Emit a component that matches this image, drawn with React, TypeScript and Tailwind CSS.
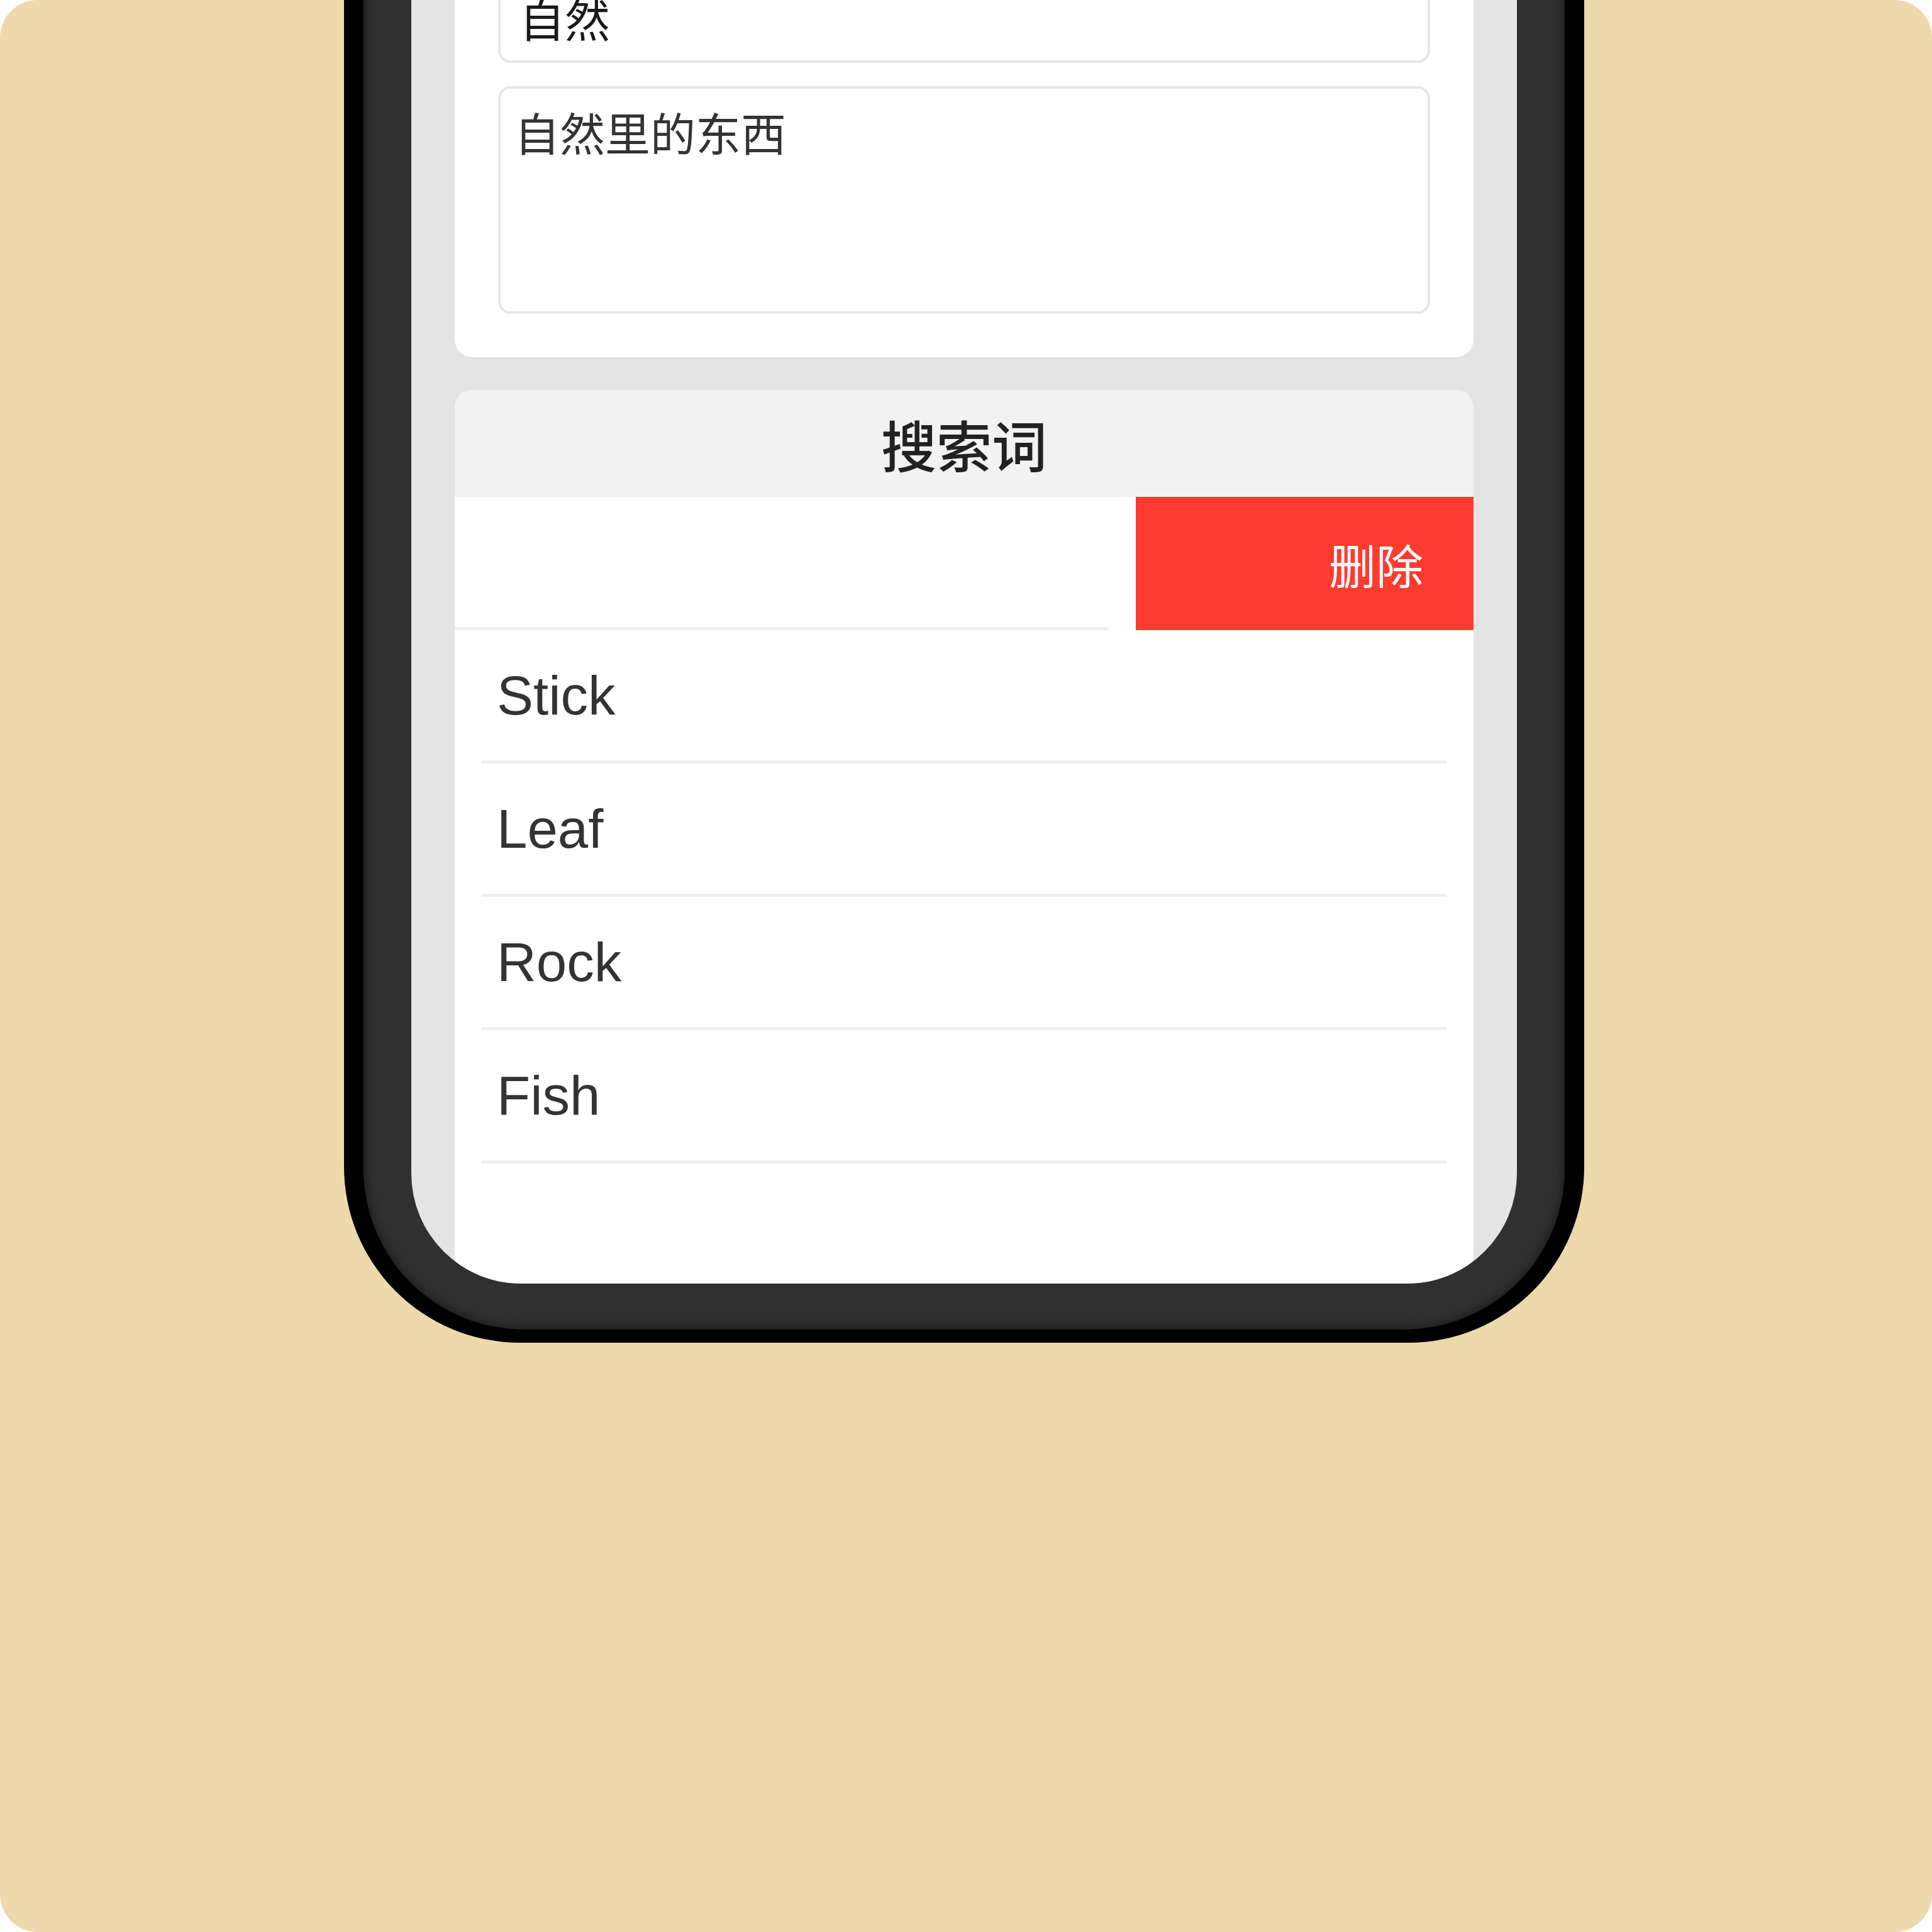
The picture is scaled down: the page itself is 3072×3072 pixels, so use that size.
const cjk = "font-['Noto_Sans_CJK_SC',sans-serif]";
const latin = "font-['Liberation_Sans','Noto_Sans_CJK_SC',sans-serif]";

const words = ['Stick', 'Leaf', 'Rock', 'Fish'];

/** 리스트 한 줄 */
function WordRow({ word }: { word: string }) {
  return (
    <div
      className={`h-[212px] mx-[43px] border-b-[5px] border-[#efefef] flex items-center pl-[24px] text-[87px] leading-none text-[#333] ${latin}`}
    >
      {word}
    </div>
  );
}

/** 스와이프로 삭제 버튼이 열린 줄 (내용은 왼쪽으로 밀려 보이지 않음) */
function SwipedRow() {
  return (
    <div className="relative h-[212px] overflow-hidden">
      <div className="-translate-x-[537px]">
        <WordRow word="" />
      </div>
      <button
        className={`absolute right-0 inset-y-0 w-[537px] bg-[#ff3b30] flex items-center justify-end pr-[80px] text-[75px] leading-none text-white ${cjk}`}
      >
        删除
      </button>
    </div>
  );
}

export default function App() {
  return (
    <div className="w-[3072px] h-[3072px] bg-white">
      <div className="w-full h-full bg-[#edd9ab] rounded-[60px] overflow-hidden">
        {/* phone */}
        <div className="-mt-[200px] ml-[547px] w-[1972px] h-[2335px] bg-black rounded-b-[280px] px-[31px] pb-[21px]">
          <div className="h-full bg-[#303030] rounded-b-[255px] px-[76px] pb-[73px] shadow-[inset_0_0_18px_rgba(0,0,0,0.6)]">
            <div className="h-full bg-[#e4e4e4] rounded-b-[175px] overflow-hidden">
              <div className="mt-[87px] px-[69px] flex flex-col gap-[52px]">
                {/* 이름 / 설명 카드 */}
                <div className="bg-white rounded-[28px] p-[69px] flex flex-col gap-[37px]">
                  <div
                    className={`h-[144px] border-[4px] border-[#e6e6e6] rounded-[20px] flex items-center pl-[30px] text-[72px] leading-[1.2] text-[#1a1a1a] ${cjk}`}
                  >
                    自然
                  </div>
                  <div
                    className={`h-[362px] border-[4px] border-[#e6e6e6] rounded-[20px] pt-[25px] px-[22px] text-[72px] leading-[1.2] text-[#333] ${cjk}`}
                  >
                    自然里的东西
                  </div>
                </div>

                {/* 검색어 카드 */}
                <div className="bg-white rounded-t-[28px] h-[1500px] overflow-hidden">
                  <div
                    className={`h-[170px] bg-[#f2f2f2] flex items-center justify-center text-[88px] leading-none font-medium text-[#222] ${cjk}`}
                  >
                    搜索词
                  </div>
                  <SwipedRow />
                  {words.map((w) => (
                    <WordRow key={w} word={w} />
                  ))}
                </div>
              </div>
            </div>
          </div>
        </div>
      </div>
    </div>
  );
}
